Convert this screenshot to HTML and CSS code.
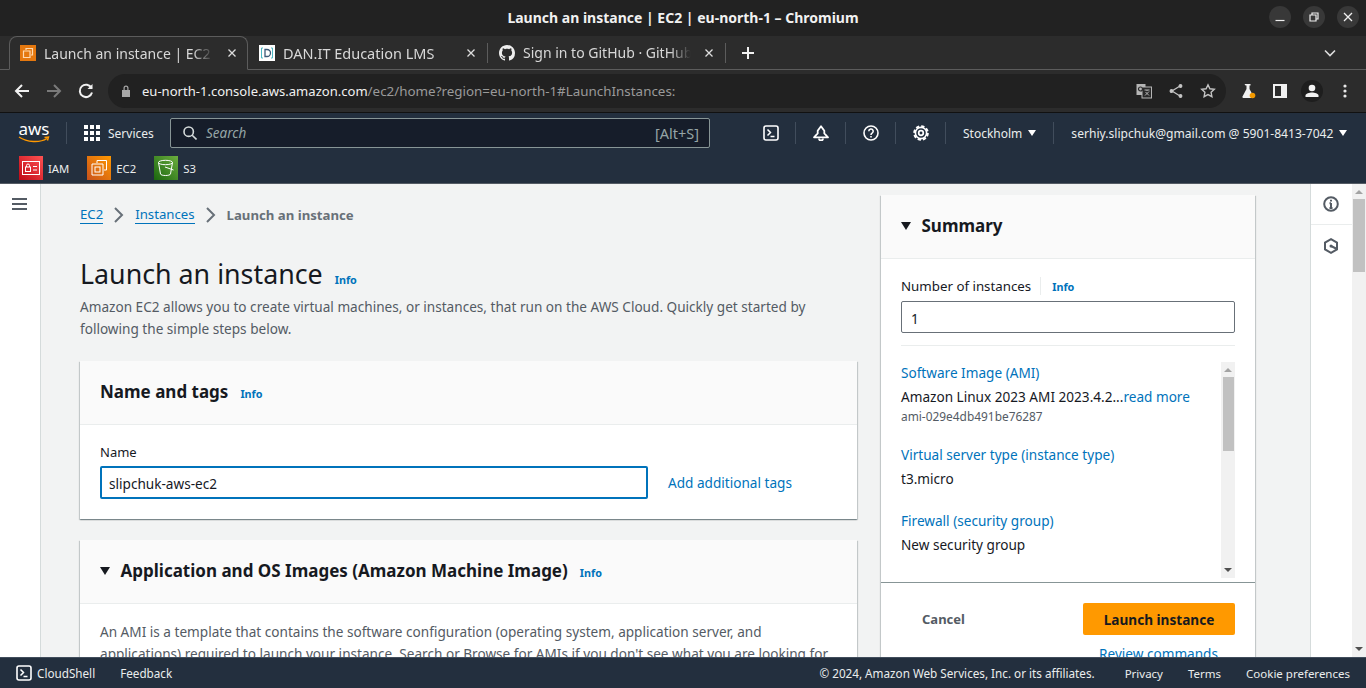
FILE: index.html
```html
<!DOCTYPE html>
<html lang="en">
<head>
    <meta charset="UTF-8">
    <meta name="viewport" content="width=device-width, initial-scale=1.0">
    <title>Launch an instance | EC2 | eu-north-1</title>
    <link rel="stylesheet" href="styles.css">
</head>
<body>
    <header class="titlebar">
        <div class="window-title">Launch an instance | EC2 | eu-north-1 – Chromium</div>
        <div class="window-btns">
            <span class="window-btn"><svg width="12" height="12" viewBox="0 0 12 12"><path d="M1.500 9.500h9" stroke="#eee" stroke-width="1.200"/></svg></span>
            <span class="window-btn"><svg width="12" height="12" viewBox="0 0 12 12" fill="none" stroke="#eee" stroke-width="1.200"><path d="M2 4h6v6H2zM4 4V2h6v6H8"/></svg></span>
            <span class="window-btn"><svg width="12" height="12" viewBox="0 0 12 12" stroke="#eee" stroke-width="1.300"><path d="M2 2l8 8M10 2l-8 8"/></svg></span>
        </div>
    </header>

    <div class="tabstrip">
        <div class="tab tab-active">
            <svg class="favicon" viewBox="0 0 16 16"><rect width="16" height="16" fill="#e5780f"/><path d="M6 5V3.500h6.500V10H11M3.500 6H10v6.500H3.500z" fill="none" stroke="#ffd9b0" stroke-width="1.200"/></svg>
            <span class="tab-label">Launch an instance | EC2 | eu-north-1</span>
            <svg class="tab-close" viewBox="0 0 10 10" stroke="#ddd" stroke-width="1.300"><path d="M1.500 1.500l7 7M8.500 1.500l-7 7"/></svg>
        </div>
        <div class="tab">
            <svg class="favicon" viewBox="0 0 16 16"><rect width="16" height="16" fill="#fff"/><path d="M4 3H2.500v10H4M12 3h1.500v10H12" fill="none" stroke="#4bb8c4"/><path d="M6 4.500v7h2a3.500 3.500 0 0 0 0-7z" fill="none" stroke="#3c5a78" stroke-width="1.300"/></svg>
            <span class="tab-label">DAN.IT Education LMS</span>
            <svg class="tab-close" viewBox="0 0 10 10" stroke="#ddd" stroke-width="1.300"><path d="M1.500 1.500l7 7M8.500 1.500l-7 7"/></svg>
        </div>
        <div class="tab tab-sep">
            <svg class="favicon" viewBox="0 0 16 16"><path fill="#eee" d="M8 0C3.580 0 0 3.580 0 8c0 3.540 2.290 6.530 5.470 7.590.4.070.55-.17.55-.38 0-.19-.01-.82-.01-1.490-2.010.37-2.530-.49-2.690-.94-.09-.23-.48-.94-.82-1.130-.28-.15-.68-.52-.01-.53.630-.01 1.080.58 1.230.82.720 1.210 1.870.87 2.330.66.070-.52.28-.87.510-1.070-1.780-.2-3.640-.89-3.640-3.950 0-.87.310-1.590.820-2.150-.08-.2-.36-1.020.08-2.120 0 0 .67-.21 2.200.82.640-.18 1.320-.27 2-.27s1.360.09 2 .27c1.530-1.040 2.200-.82 2.200-.82.44 1.100.16 1.920.08 2.120.51.560.82 1.270.82 2.150 0 3.070-1.870 3.750-3.650 3.950.29.250.54.730.54 1.480 0 1.070-.01 1.930-.01 2.200 0 .21.150.46.550.38A8.010 8.010 0 0 0 16 8c0-4.420-3.580-8-8-8z"/></svg>
            <span class="tab-label">Sign in to GitHub · GitHub</span>
            <svg class="tab-close" viewBox="0 0 10 10" stroke="#ddd" stroke-width="1.300"><path d="M1.500 1.500l7 7M8.500 1.500l-7 7"/></svg>
        </div>
        <svg class="new-tab" width="14" height="14" viewBox="0 0 14 14" stroke="#f1f1f1" stroke-width="2"><path d="M7 1v12M1 7h12"/></svg>
        <svg class="tab-list" width="12" height="8" viewBox="0 0 12 8" fill="none" stroke="#ddd" stroke-width="1.600"><path d="M1 1.500l5 5 5-5"/></svg>
    </div>

    <div class="toolbar">
        <svg class="tool-btn" width="16" height="16" viewBox="0 0 16 16" fill="none" stroke="#f1f1f1" stroke-width="2"><path d="M15 8H2M8 2L2 8l6 6"/></svg>
        <svg class="tool-btn" width="16" height="16" viewBox="0 0 16 16" fill="none" stroke="#7a7a7a" stroke-width="2"><path d="M1 8h13M8 2l6 6-6 6"/></svg>
        <svg class="tool-btn" width="16" height="16" viewBox="0 0 16 16" fill="none" stroke="#f1f1f1" stroke-width="2"><path d="M13.500 5A6.200 6.200 0 1 0 14 9.500"/><path d="M14.500 1v5h-5" fill="#f1f1f1" stroke="none"/></svg>
        <div class="omnibox">
            <svg width="10" height="12" viewBox="0 0 10 12"><path fill="#a8a8a8" d="M1 5h8v7H1zM2.500 5V3a2.500 2.500 0 0 1 5 0v2H6.300V3a1.300 1.300 0 0 0-2.600 0v2z"/></svg>
            <div class="url"><span class="url-host">eu-north-1.console.aws.amazon.com</span>/ec2/home?region=eu-north-1#LaunchInstances:</div>
            <svg class="omni-icon" width="16" height="16" viewBox="0 0 16 16"><rect x="0.500" y="1" width="9" height="11" fill="#b5b5b5"/><rect x="6" y="4" width="9.500" height="11" fill="#2a2a2a" stroke="#b5b5b5"/><circle cx="4.500" cy="6" r="2" fill="none" stroke="#2a2a2a" stroke-width="1.200"/><path d="M8.500 7h5M11 7v1M9 12.500l4-4M9.500 9l3.500 3.500" stroke="#b5b5b5" fill="none"/></svg>
            <svg class="omni-icon" width="16" height="16" viewBox="0 0 16 16" fill="#c4c4c4" stroke="#c4c4c4" stroke-width="1.300"><path d="M12 3L4 8l8 5" fill="none"/><circle cx="12.500" cy="3" r="1.300"/><circle cx="3.500" cy="8" r="1.300"/><circle cx="12.500" cy="13" r="1.300"/></svg>
            <svg class="omni-icon" width="16" height="16" viewBox="0 0 16 16" fill="none" stroke="#c4c4c4" stroke-width="1.400"><path d="M8 1.800l1.900 4 4.400.5-3.200 3 .8 4.400L8 11.600l-3.900 2.100.8-4.400-3.200-3 4.400-.5z"/></svg>
        </div>
        <div class="toolbar-right">
            <span class="ext-flask"><svg width="16" height="16" viewBox="0 0 16 16"><path fill="#f1f1f1" d="M4.500 1h6v1.500h-1V6l4 7.500a1 1 0 0 1-1 1.500h-9a1 1 0 0 1-1-1.500l4-7.500V2.500h-1z"/><circle cx="12.500" cy="12.500" r="2.800" fill="#f29900"/></svg></span>
            <svg width="14" height="14" viewBox="0 0 14 14"><path fill="#f1f1f1" fill-rule="evenodd" d="M0 0h14v14H0zM2 2v10h6V2z"/></svg>
            <span class="avatar"><svg width="16" height="16" viewBox="0 0 16 16" fill="#f1f1f1"><circle cx="8" cy="5" r="3.300"/><path d="M1.500 14v-1.500c0-2 4-3 6.500-3s6.500 1 6.500 3V14z"/></svg></span>
            <svg width="4" height="14" viewBox="0 0 4 14" fill="#e8e8e8"><circle cx="2" cy="2" r="1.600"/><circle cx="2" cy="7" r="1.600"/><circle cx="2" cy="12" r="1.600"/></svg>
        </div>
    </div>

    <nav class="aws-nav">
        <div class="nav-top">
            <div class="aws-logo">
                <span>aws</span>
                <svg width="32" height="7" viewBox="0 0 32 7" fill="none" stroke="#f90" stroke-width="1.400"><path d="M1 1c8 5.500 21 6 28 1.500M26.500 1.500l4-.5-1 3.500"/></svg>
            </div>
            <div class="nav-sep nav-sep-logo"></div>
            <svg class="grid-icon" width="16" height="16" viewBox="0 0 16 16" fill="#fff"><path d="M0 0h4v4H0zM6 0h4v4H6zM12 0h4v4h-4zM0 6h4v4H0zM6 6h4v4H6zM12 6h4v4h-4zM0 12h4v4H0zM6 12h4v4H6zM12 12h4v4h-4z"/></svg>
            <span class="services">Services</span>
            <div class="nav-search">
                <svg width="14" height="14" viewBox="0 0 14 14" fill="none" stroke="#d5dbdb" stroke-width="1.600"><circle cx="5.700" cy="5.700" r="4.700"/><path d="M9.200 9.200l4.300 4.300"/></svg>
                <span class="search-ph">Search</span>
                <span class="search-key">[Alt+S]</span>
            </div>
            <div class="nav-icon nav-icon-first"><svg width="16" height="16" viewBox="0 0 16 16" fill="none" stroke="#fff"><rect x="1" y="1" width="14" height="14" rx="2" stroke-width="1.600"/><path d="M4.500 4.500L7.500 7.500l-3 3M7.500 11.500h4" stroke-width="1.500"/></svg></div>
            <div class="nav-sep"></div>
            <div class="nav-icon"><svg width="16" height="16" viewBox="0 0 16 16" fill="none" stroke="#fff" stroke-width="1.800"><path d="M8 1.200l3.300 4.600v2.600L15 12.300H1l3.700-3.900V5.800z" stroke-linejoin="round"/><path d="M6 13.500a2 2 0 0 0 4 0"/></svg></div>
            <div class="nav-sep"></div>
            <div class="nav-icon"><svg width="16" height="16" viewBox="0 0 16 16" fill="none" stroke="#fff" stroke-width="1.600"><circle cx="8" cy="8" r="7"/><path d="M5.800 6.200a2.200 2.200 0 1 1 3.300 1.900c-.8.500-1.100.9-1.100 1.900"/><path d="M8 11v1.600"/></svg></div>
            <div class="nav-sep"></div>
            <div class="nav-icon"><svg width="16" height="16" viewBox="0 0 16 16" fill="none" stroke="#fff"><circle cx="8" cy="8" r="5.600" stroke-width="1.600"/><circle cx="8" cy="8" r="6.800" stroke-width="2" stroke-dasharray="3.300 2.040"/><circle cx="8" cy="8" r="2.300" stroke-width="1.700"/></svg></div>
            <div class="nav-sep"></div>
            <span class="nav-menu region">Stockholm</span><span class="caret"></span>
            <div class="nav-sep nav-sep-user"></div>
            <span class="nav-menu user">serhiy.slipchuk@gmail.com @ 5901-8413-7042</span><span class="caret"></span>
        </div>
        <div class="nav-shortcuts">
            <div class="shortcut">
                <span class="svc-icon svc-iam"><svg width="18" height="14" viewBox="0 0 18 14" fill="none" stroke="#fff"><rect x=".5" y=".5" width="17" height="13"/><rect x="3.500" y="6" width="5" height="4.500"/><path d="M4.500 6V4.500a1.500 1.500 0 0 1 3 0V6M11 5.500h4M11 9h4"/></svg></span>IAM
            </div>
            <div class="shortcut">
                <span class="svc-icon svc-ec2"><svg width="18" height="18" viewBox="0 0 18 18" fill="none" stroke="#fff"><path d="M7 4V1.500h9.500V11H14M2 5h11v11H2z"/><rect x="5" y="8" width="5" height="5"/></svg></span>EC2
            </div>
            <div class="shortcut">
                <span class="svc-icon svc-s3"><svg width="18" height="18" viewBox="0 0 18 18" fill="none" stroke="#fff"><ellipse cx="8.500" cy="3.500" rx="7" ry="2.200"/><path d="M1.500 3.500L3.500 15c.5 2 9.500 2 10 0l2-11.500M8 8l8.500 3"/></svg></span>S3
            </div>
        </div>
    </nav>

    <div class="app">
        <aside class="sidenav">
            <svg width="15" height="12" viewBox="0 0 15 12" stroke="#545b64" stroke-width="2"><path d="M0 1h15M0 6h15M0 11h15"/></svg>
        </aside>

        <main class="content">
            <div class="main-col">
                <div class="breadcrumbs">
                    <a class="crumb">EC2</a>
                    <svg width="12" height="18" viewBox="0 0 12 18" fill="none" stroke="#687078" stroke-width="2"><path d="M2 2l7 7-7 7"/></svg>
                    <a class="crumb">Instances</a>
                    <svg width="12" height="18" viewBox="0 0 12 18" fill="none" stroke="#687078" stroke-width="2"><path d="M2 2l7 7-7 7"/></svg>
                    <span class="crumb-current">Launch an instance</span>
                </div>
                <div class="page-head">
                    <h1>Launch an instance</h1>
                    <a class="info">Info</a>
                </div>
                <p class="page-desc">Amazon EC2 allows you to create virtual machines, or instances, that run on the AWS Cloud. Quickly get started by following the simple steps below.</p>

                <section class="card">
                    <div class="card-head">
                        <h2>Name and tags</h2>
                        <a class="info">Info</a>
                    </div>
                    <div class="card-body">
                        <label class="field-label">Name</label>
                        <div class="name-row">
                            <div class="input input-focus">slipchuk-aws-ec2</div>
                            <a class="add-tags">Add additional tags</a>
                        </div>
                    </div>
                </section>

                <section class="card">
                    <div class="card-head">
                        <span class="tri"></span>
                        <h2>Application and OS Images (Amazon Machine Image)</h2>
                        <a class="info">Info</a>
                    </div>
                    <div class="card-body">
                        <p class="card-text">An AMI is a template that contains the software configuration (operating system, application server, and applications) required to launch your instance. Search or Browse for AMIs if you don't see what you are looking for</p>
                    </div>
                </section>
            </div>

            <section class="card summary">
                <div class="card-head summary-head">
                    <span class="tri"></span>
                    <h2>Summary</h2>
                </div>
                <div class="summary-body">
                    <div class="count-label">
                        <span>Number of instances</span>
                        <a class="info">Info</a>
                    </div>
                    <div class="input input-count">1</div>
                    <div class="summary-rule"></div>
                    <div class="summary-scroll">
                        <div class="summary-list">
                            <a class="sum-link">Software Image (AMI)</a>
                            <div class="sum-value">Amazon Linux 2023 AMI 2023.4.2...<a class="sum-more">read more</a></div>
                            <div class="sum-sub">ami-029e4db491be76287</div>
                            <a class="sum-link">Virtual server type (instance type)</a>
                            <div class="sum-value">t3.micro</div>
                            <a class="sum-link sum-link-gap">Firewall (security group)</a>
                            <div class="sum-value">New security group</div>
                        </div>
                        <div class="scrollbar scrollbar-inner">
                            <span class="arrow-up"></span>
                            <span class="thumb"></span>
                            <span class="arrow-down"></span>
                        </div>
                    </div>
                </div>
                <div class="summary-foot">
                    <div class="summary-actions">
                        <a class="cancel">Cancel</a>
                        <button class="launch-btn">Launch instance</button>
                    </div>
                    <a class="review">Review commands</a>
                </div>
            </section>
        </main>

        <aside class="tools">
            <div class="tool tool-first"><svg width="16" height="16" viewBox="0 0 16 16" fill="none" stroke="#545b64" stroke-width="2"><circle cx="8" cy="8" r="6.800"/><path d="M8 7v5M6.500 12h3M6.500 7.300H8"/><path d="M8 3.700v1.800" stroke-width="2"/></svg></div>
            <div class="tool"><svg width="16" height="16" viewBox="0 0 16 16" fill="none" stroke="#545b64" stroke-width="2"><path d="M8 1.200l6 3.400v6.800l-6 3.400-6-3.400V4.600z"/><circle cx="8" cy="8" r="1.500" fill="#545b64" stroke="none"/><path d="M8 8l6 3"/></svg></div>
        </aside>

        <div class="scrollbar scrollbar-page">
            <span class="arrow-up"></span>
            <span class="thumb"></span>
            <span class="arrow-down"></span>
        </div>
    </div>

    <footer class="console-foot">
        <svg width="16" height="16" viewBox="0 0 16 16" fill="none" stroke="#fff"><rect x="1" y="1" width="14" height="14" rx="2" stroke-width="1.600"/><path d="M4.500 4.500L7.500 7.500l-3 3M7.500 11.500h4" stroke-width="1.500"/></svg>
        <span class="foot-shell">CloudShell</span>
        <span class="foot-feedback">Feedback</span>
        <span class="foot-copy">© 2024, Amazon Web Services, Inc. or its affiliates.</span>
        <span class="foot-link foot-link-first">Privacy</span>
        <span class="foot-link">Terms</span>
        <span class="foot-link">Cookie preferences</span>
    </footer>
</body>
</html>
```

FILE: styles.css
```css
* {
    box-sizing: border-box;
}
html, body {
    height: 100%;
}
body {
    margin: 0;
    height: 688px;
    overflow: hidden;
    display: flex;
    flex-direction: column;
    font-family: "Noto Sans", "Open Sans", sans-serif;
    font-size: 14px;
    color: #16191f;
    background-color: #f2f3f3;
}
h1, h2, p {
    margin: 0;
}
a {
    color: #0073bb;
}

/* browser chrome */
.titlebar {
    height: 36px;
    flex: none;
    display: flex;
    align-items: center;
    justify-content: center;
    position: relative;
    padding-bottom: 2px;
    background-color: #222;
}
.window-title {
    color: #f1f1f1;
    font-size: 14px;
    font-weight: 700;
}
.window-btns {
    position: absolute;
    right: 7px;
    top: 6px;
    display: flex;
    gap: 12px;
}
.window-btn {
    width: 22px;
    height: 22px;
    border-radius: 50%;
    background-color: #383838;
    display: flex;
    align-items: center;
    justify-content: center;
}
.tabstrip {
    height: 34px;
    flex: none;
    display: flex;
    align-items: center;
    background-color: #2c2c2c;
    border-bottom: 1px solid #5c5c5c;
    padding-left: 9px;
}
.tab {
    width: 239px;
    height: 34px;
    display: flex;
    align-items: center;
    padding: 0 10px 0 11px;
    color: #d8d8d8;
    font-size: 14px;
}
.tab:nth-child(2) .tab-label {
    font-size: 14.500px;
}
.tab-active {
    border: 1px solid #5c5c5c;
    border-bottom: 1px solid #2c2c2c;
    border-radius: 8px 8px 0 0;
    background-color: #2c2c2c;
    padding-left: 10px;
    padding-right: 9px;
    margin-bottom: -1px;
    height: 34px;
}
.tab-sep {
    border-left: 1px solid #5c5c5c;
    border-right: 1px solid #5c5c5c;
    height: 20px;
    margin-left: 0;
}
.favicon {
    width: 16px;
    height: 16px;
    flex: none;
}
.tab-label {
    flex: 1;
    margin-left: 8px;
    overflow: hidden;
    white-space: nowrap;
    -webkit-mask-image: linear-gradient(90deg, #000 85%, transparent 97%);
    mask-image: linear-gradient(90deg, #000 85%, transparent 97%);
}
.tab-close {
    width: 10px;
    height: 10px;
    flex: none;
    margin-left: 8px;
    margin-right: 1px;
}
.new-tab {
    margin-left: 15px;
}
.tab-list {
    margin-left: auto;
    margin-right: 30px;
}
.toolbar {
    height: 43px;
    flex: none;
    display: flex;
    align-items: center;
    padding-left: 14px;
    background-color: #2c2c2c;
    border-bottom: 1px solid #111;
}
.tool-btn {
    margin-right: 16px;
}
.tool-btn:nth-child(3) {
    margin-right: 14px;
}
.omnibox {
    width: 1118px;
    height: 34px;
    border-radius: 17px;
    background-color: #212121;
    display: flex;
    align-items: center;
    padding: 0 10px 0 13px;
    margin-bottom: 1px;
}
.url {
    flex: 1;
    margin-left: 11px;
    color: #9a9a9a;
    font-size: 13.400px;
    white-space: nowrap;
}
.url-host {
    font-size: 13.050px;
    color: #f1f1f1;
}
.omni-icon {
    margin-left: 16px;
}
.toolbar-right {
    display: flex;
    align-items: center;
    margin-left: 14px;
}
.ext-flask {
    display: flex;
    width: 16px;
}
.toolbar-right > svg:nth-child(2) {
    margin-left: 17px;
}
.avatar {
    width: 22px;
    height: 22px;
    border-radius: 50%;
    background-color: #1e1e1e;
    display: flex;
    align-items: center;
    justify-content: center;
    margin-left: 14px;
}
.toolbar-right > svg:last-child {
    margin-left: 20px;
}

/* aws top nav */
.aws-nav {
    height: 71px;
    flex: none;
    background-color: #232f3e;
    border-bottom: 1px solid #545b64;
    color: #fff;
    font-size: 12px;
}
.nav-top {
    height: 40px;
    display: flex;
    align-items: center;
    padding: 0 0 0 18px;
}
.aws-logo {
    width: 32px;
    height: 26px;
    display: flex;
    flex-direction: column;
    align-items: center;
    font-size: 17px;
    line-height: 17px;
    color: #fff;
}
.aws-logo svg {
    margin-top: -1px;
}
.nav-sep {
    width: 1px;
    height: 22px;
    background-color: #414d5c;
    flex: none;
}
.nav-sep-logo {
    margin-left: 16px;
}
.grid-icon {
    margin-left: 17px;
}
.services {
    margin-left: 8px;
    width: 46px;
    color: #eaeded;
    white-space: nowrap;
}
.nav-search {
    width: 540px;
    height: 30px;
    margin-left: 16px;
    display: flex;
    align-items: center;
    padding: 0 10px 0 12px;
    background-color: #161d2a;
    border: 1px solid #879596;
    border-radius: 2px;
    font-size: 14.500px;
}
.search-ph {
    margin-left: 9px;
    font-style: italic;
    font-size: 13.500px;
    color: #95a5a6;
}
.search-key {
    margin-left: auto;
    color: #95a5a6;
}
.nav-icon {
    width: 49px;
    flex: none;
    display: flex;
    justify-content: center;
}
.nav-icon-first {
    margin-left: 36px;
}
.region {
    margin-left: 17px;
    color: #eaeded;
}
.caret {
    width: 0;
    height: 0;
    border-left: 4.500px solid transparent;
    border-right: 4.500px solid transparent;
    border-top: 6px solid #fff;
    margin-left: 6px;
}
.nav-sep-user {
    margin-left: 17px;
}
.user {
    margin-left: 17px;
    font-size: 12.100px;
    color: #eaeded;
}
.nav-shortcuts {
    display: flex;
    padding: 3px 0 0 19px;
    gap: 18px;
    font-size: 11.300px;
}
.shortcut {
    display: flex;
    align-items: center;
    gap: 5px;
    color: #eaeded;
}
.svc-icon {
    width: 24px;
    height: 24px;
    display: flex;
    align-items: center;
    justify-content: center;
}
.svc-iam {
    background: linear-gradient(45deg, #bd0816, #ff5252);
}
.svc-ec2 {
    background: linear-gradient(45deg, #c8511b, #ff9900);
}
.svc-s3 {
    background: linear-gradient(45deg, #1b660f, #6cae3e);
}

/* page */
.app {
    flex: 1;
    min-height: 0;
    display: flex;
    overflow: hidden;
}
.sidenav {
    width: 41px;
    flex: none;
    background-color: #fff;
    border-right: 1px solid #d5dbdb;
    padding: 14px 0 0 12px;
}
.sidenav svg {
    display: block;
}
.content {
    flex: 1;
    min-width: 0;
    display: flex;
    align-items: flex-start;
    gap: 24px;
    padding: 11px 55px 0 39px;
}
.main-col {
    width: 777px;
    flex: none;
    padding-top: 10px;
}
.breadcrumbs {
    display: flex;
    align-items: center;
    height: 20px;
    gap: 10px;
    font-size: 13.200px;
}
.crumb {
    color: #0073bb;
    border-bottom: 1px solid #0073bb;
    line-height: 17px;
}
.crumb-current {
    color: #687078;
    font-weight: 700;
}
.page-head {
    display: flex;
    align-items: baseline;
    margin-top: 31px;
}
h1 {
    font-size: 26.800px;
    font-weight: 400;
    line-height: 36px;
}
.info {
    font-size: 10.800px;
    font-weight: 700;
    margin-left: 12px;
}
.page-desc {
    margin-top: 4px;
    line-height: 22px;
    font-size: 13.600px;
    color: #545b64;
}
.card {
    background-color: #fff;
    box-shadow: 0 1px 1px 0 rgba(0, 28, 36, .3), 1px 1px 1px 0 rgba(0, 28, 36, .15), -1px 1px 1px 0 rgba(0, 28, 36, .15);
    margin-top: 21px;
}
.card-head {
    height: 64px;
    display: flex;
    align-items: center;
    padding: 0 20px 2px;
    background-color: #fafafa;
    border-bottom: 1px solid #eaeded;
}
.card-head .info {
    margin-top: 4px;
}
h2 {
    font-size: 17px;
    font-weight: 700;
}
.tri {
    width: 0;
    height: 0;
    border-left: 5.500px solid transparent;
    border-right: 5.500px solid transparent;
    border-top: 8px solid #16191f;
    margin-right: 10.500px;
}
.card-body {
    padding: 17px 20px 20px;
    height: 94px;
}
.field-label {
    display: block;
    line-height: 20px;
    font-size: 13px;
}
.name-row {
    display: flex;
    align-items: center;
    margin-top: 4px;
}
.input {
    font-size: 13.600px;
    border-radius: 2px;
    background-color: #fff;
    display: flex;
    align-items: center;
    padding-top: 2px;
}
.input-focus {
    width: 548px;
    height: 33px;
    padding-left: 7px;
    border: 2px solid #0073bb;
}
.add-tags {
    margin-left: 20px;
    font-size: 13.600px;
}
.card-text {
    font-size: 13.600px;
    line-height: 22px;
    color: #545b64;
}
.card:last-child .card-body {
    height: auto;
}

/* summary */
.summary {
    width: 374px;
    flex: none;
    margin-top: 0;
}
.summary-head {
    height: 64px;
}
.summary-body {
    padding: 17px 20px 0;
}
.count-label {
    display: flex;
    align-items: center;
    height: 20px;
    font-size: 13.300px;
}
.count-label span {
    padding-right: 9px;
    border-right: 1px solid #eaeded;
}
.count-label .info {
    margin-left: 11px;
}
.input-count {
    width: 334px;
    height: 32px;
    margin-top: 5px;
    padding-left: 9px;
    border: 1px solid #687078;
}
.summary-rule {
    margin-top: 12px;
    height: 1px;
    background-color: #eaeded;
}
.summary-scroll {
    margin-top: 16px;
    height: 216px;
    display: flex;
    justify-content: space-between;
}
.summary-list {
    font-size: 13.600px;
    padding-top: 1px;
}
.sum-link {
    display: block;
    line-height: 20px;
}
.sum-value {
    line-height: 20px;
    margin-top: 4px;
}
.sum-more {
    color: #0073bb;
}
.sum-sub {
    font-size: 11.900px;
    line-height: 16px;
    color: #545b64;
    margin-bottom: 21px;
    margin-top: 1px;
}
.sum-link-gap {
    margin-top: 22px;
}
.scrollbar {
    background-color: #f1f1f1;
    display: flex;
    flex-direction: column;
    align-items: center;
    flex: none;
    position: relative;
}
.scrollbar-inner {
    width: 14px;
}
.scrollbar-page {
    width: 14px;
}
.thumb {
    width: 100%;
    background-color: #c1c1c1;
}
.scrollbar-inner .thumb {
    height: 74px;
    margin-top: 5px;
    width: 11px;
}
.scrollbar-page .thumb {
    height: 73px;
    margin-top: 5px;
    width: 12px;
}
.arrow-up, .arrow-down {
    width: 0;
    height: 0;
    border-left: 4px solid transparent;
    border-right: 4px solid transparent;
}
.arrow-up {
    border-bottom: 4px solid #a3a3a3;
    margin-top: 6px;
}
.arrow-down {
    border-top: 4px solid #505050;
    position: absolute;
    bottom: 6px;
}
.summary-foot {
    border-top: 1px solid #879596;
    margin-top: 4px;
    padding: 20px 20px 0;
}
.summary-actions {
    display: flex;
    align-items: center;
    justify-content: space-between;
}
.cancel {
    color: #545b64;
    font-weight: 700;
    font-size: 13px;
    margin-left: 21px;
}
.launch-btn {
    width: 152px;
    height: 32px;
    border: 0;
    border-radius: 2px;
    background-color: #f90;
    color: #16191f;
    font-family: inherit;
    font-weight: 700;
    font-size: 13.600px;
}
.review {
    display: block;
    text-align: right;
    margin: 9px 17px 0 0;
    font-size: 13.600px;
    line-height: 20px;
}

.tools {
    width: 42px;
    margin-left: auto;
    flex: none;
    background-color: #fff;
    border-left: 1px solid #d5dbdb;
}
.tool {
    height: 41px;
    display: flex;
    align-items: center;
    justify-content: center;
    padding-right: 1px;
}
.tool-first {
    border-bottom: 1px solid #eaeded;
}

.console-foot {
    height: 31px;
    flex: none;
    display: flex;
    align-items: center;
    padding: 0 16px;
    background-color: #232f3e;
    border-top: 1px solid #414d5c;
    color: #eaeded;
    font-size: 11.700px;
}
.foot-shell {
    margin-left: 5px;
}
.foot-feedback {
    margin-left: 25px;
}
.foot-copy {
    margin-left: auto;
}
.foot-link {
    margin-left: 25px;
    font-size: 11.500px;
}
.foot-link-first {
    margin-left: 30px;
}
```
